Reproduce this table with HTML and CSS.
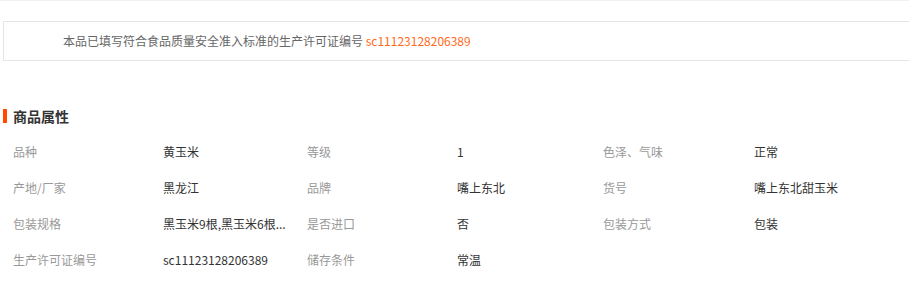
FILE: index.html
```html
<!DOCTYPE html>
<html lang="zh-CN">
<head>
<meta charset="utf-8">
<title>商品属性</title>
<link rel="stylesheet" href="styles.css">
</head>
<body>
<div class="page">
  <div class="license-box">
    本品已填写符合食品质量安全准入标准的生产许可证编号 <span class="license-no">sc11123128206389</span>
  </div>
  <h2 class="attr-title">商品属性</h2>
  <div class="attr-grid">
    <div class="label">品种</div><div class="value">黄玉米</div>
    <div class="label">等级</div><div class="value">1</div>
    <div class="label">色泽、气味</div><div class="value">正常</div>

    <div class="label">产地/厂家</div><div class="value">黑龙江</div>
    <div class="label">品牌</div><div class="value">嘴上东北</div>
    <div class="label">货号</div><div class="value">嘴上东北甜玉米</div>

    <div class="label">包装规格</div><div class="value">黑玉米9根,黑玉米6根...</div>
    <div class="label">是否进口</div><div class="value">否</div>
    <div class="label">包装方式</div><div class="value">包装</div>

    <div class="label">生产许可证编号</div><div class="value">sc11123128206389</div>
    <div class="label">储存条件</div><div class="value">常温</div>
    <div class="label"></div><div class="value"></div>
  </div>
</div>
</body>
</html>
```

FILE: styles.css
```css
html, body {
  margin: 0;
  padding: 0;
  background: #fff;
}

body {
  font-family: "Noto Sans CJK SC", "Liberation Sans", sans-serif;
  font-size: 12px;
  color: #333;
}

.page {
  border-top: 1px solid #f2f2f2;
  padding-top: 20px;
}

.license-box {
  margin-left: 3px;
  border: 1px solid #e5e5e5;
  border-right: none;
  height: 38px;
  line-height: 38px;
  padding-left: 59px;
  color: #666;
}

.license-no {
  color: #ff6a1a;
}

.attr-title {
  display: flex;
  align-items: center;
  gap: 6px;
  margin: 45px 0 0 3px;
  height: 20px;
  line-height: 20px;
  font-size: 14px;
  font-weight: bold;
  color: #333;
}

.attr-title::before {
  content: "";
  width: 4px;
  height: 14px;
  background: #ff4a00;
}

.attr-grid {
  display: grid;
  grid-template-columns: 150px 144px 150px 146px 151px 1fr;
  grid-auto-rows: 36px;
  align-items: center;
  margin-top: 7px;
  padding-left: 13px;
}

.label {
  color: #999;
  white-space: nowrap;
}

.value {
  color: #333;
  white-space: nowrap;
}
```
